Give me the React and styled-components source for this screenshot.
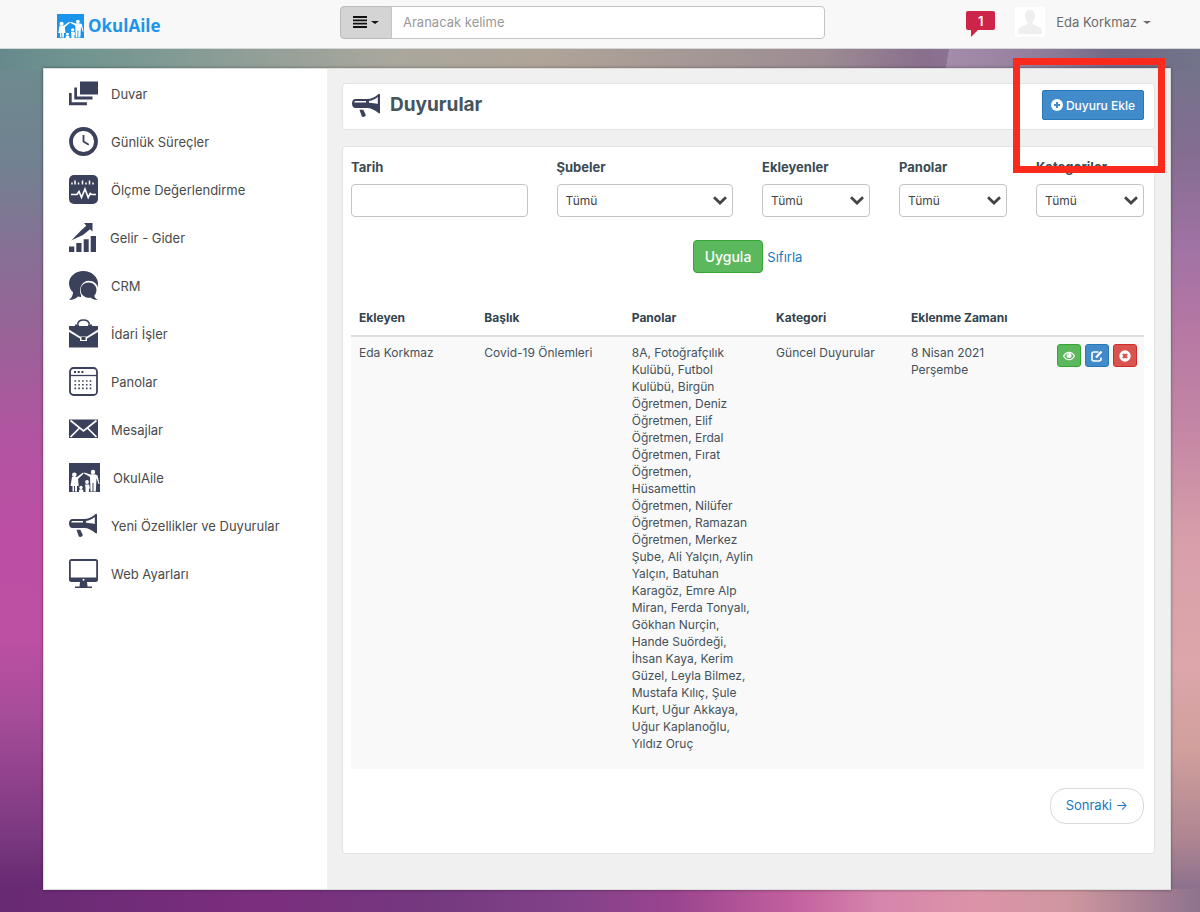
import React from "react";
import styled, { createGlobalStyle } from "styled-components";

const GlobalStyle = createGlobalStyle`
	* {
		box-sizing: border-box;
	}
	body {
		margin: 0;
		font-family: Inter, "Liberation Sans", sans-serif;
		font-size: 13px;
		line-height: 20px;
		color: #44515a;
		background-color: #8b5a96;
		background-image:
			linear-gradient(90deg, #682a73 0%, #7b2e7e 22%, #74397f 36%, #834289 48%, #9a448e 56%, #c2609f 66%, #d584ab 73%, #dc93a9 81%, #cf979f 89%, #8e728d 100%),
			linear-gradient(100deg, transparent 79%, #a38caa 79%, transparent 92%),
			linear-gradient(90deg, #668a8c 0%, #6f9490 6%, #a9a79d 32%, #b0a498 45%, #9d8d93 68%, #8a6f8d 77%, #8f7898 82%, #716a86 93%, #71748a 100%),
			linear-gradient(180deg, #6c8c8f 6%, #728191 18%, #886f95 28%, #9b6198 38%, #b055a0 47%, #bc4fa3 58%, #bd50a2 70%, #a84d99 78%, #79387f 92%, #682a73 97%),
			linear-gradient(180deg, #71748a 6%, #856d91 17%, #a073a4 27%, #b677a4 36%, #c688a5 48%, #d9a0aa 60%, #dca6aa 73%, #d1a09d 82%, #af8592 92%, #8e728d 97%);
		background-size: 100% 24px, 100% 70px, 100% 70px, 50% 100%, 50% 100%;
		background-position: left bottom, left top, left top, left top, right top;
		background-repeat: no-repeat;
	}
	button, input, select {
		font-family: inherit;
	}
	a {
		color: #1a78c2;
		text-decoration: none;
	}
`;

const Header = styled.header`
	display: flex;
	align-items: center;
	height: 49px;
	padding: 0 49px 4px 57px;
	background: #f8f8f8;
	border-bottom: 1px solid #d3d7d7;
`;

const Logo = styled.a`
	display: flex;
	align-items: center;
	gap: 4px;
	width: 283px;
	padding-top: 8px;
	font-family: "Open Sans", "Noto Sans", sans-serif;
	font-size: 17px;
	font-weight: 700;
	color: #1b95ec;
`;

const Search = styled.form`
	display: flex;
	flex: 1;
	height: 33px;
`;

const SearchMenu = styled.button`
	display: flex;
	align-items: center;
	justify-content: center;
	gap: 4px;
	width: 52px;
	padding: 0;
	color: #111;
	background: #d4d4d4;
	border: 1px solid #bbb;
	border-radius: 4px 0 0 4px;
`;

const SearchInput = styled.input`
	flex: 1;
	min-width: 0;
	margin-left: -1px;
	padding: 0 11px;
	font-size: 13px;
	background: #fff;
	border: 1px solid #c4c4c4;
	border-radius: 0 4px 4px 0;
	&::placeholder {
		color: #999;
	}
`;

const Caret = styled.span`
	border-top: 3px solid ${(props) => props.color};
	border-left: 4px solid transparent;
	border-right: 4px solid transparent;
`;

const HeaderRight = styled.div`
	display: flex;
	align-items: center;
	justify-content: flex-end;
	gap: 20px;
	width: 326px;
`;

const Bubble = styled.a`
	position: relative;
	width: 29px;
	height: 19px;
	margin-bottom: 4px;
	border-radius: 2px;
	background: #cc2549;
	color: #fff;
	text-align: center;
	font-weight: 600;
	line-height: 20px;
	&::after {
		content: "";
		position: absolute;
		left: 5px;
		top: 18px;
		border-top: 8px solid #cc2549;
		border-right: 8px solid transparent;
	}
`;

const UserMenu = styled.button`
	display: flex;
	align-items: center;
	gap: 6px;
	padding: 0;
	border: 0;
	background: none;
	font-size: 13px;
	color: #6b6b6b;
`;

const Avatar = styled.svg`
	margin-right: 5px;
	background: #fff;
`;

const Page = styled.div`
	position: relative;
	display: flex;
	margin: 19px 29px 0 43px;
	background: #f0f0f0;
	border: 1px solid #dcdcdc;
	box-shadow: 0 0 3px rgba(0, 0, 0, 0.4);
`;

const Outer = styled.div`
	padding-bottom: 23px;
`;

const Highlight = styled.div`
	position: absolute;
	top: -11px;
	right: 5px;
	width: 152px;
	height: 115px;
	border: 7px solid #fc2a1c;
	pointer-events: none;
`;

const Sidebar = styled.nav`
	width: 283px;
	flex-shrink: 0;
	background: #fff;
`;

const MenuItem = styled.a`
	display: flex;
	align-items: center;
	gap: 13px;
	height: 48px;
	padding-left: 25px;
	color: #4a4a4a;
	span {
		padding-top: 2px;
	}
`;

const Content = styled.main`
	flex: 1;
	min-width: 0;
	display: flex;
	flex-direction: column;
	gap: 16px;
	padding: 14px 15px 35px;
`;

const Card = styled.section`
	background: #fff;
	border: 1px solid #e3e3e3;
	border-radius: 4px;
`;

const TitleCard = styled(Card)`
	display: flex;
	align-items: center;
	gap: 9px;
	height: 47px;
	padding: 0 10px 3px 9px;
`;

const Title = styled.h1`
	flex: 1;
	margin: 0;
	font-size: 19px;
	font-weight: 700;
	line-height: 24px;
	color: #46545c;
`;

const AddButton = styled.button`
	display: flex;
	align-items: center;
	gap: 3px;
	height: 30px;
	padding: 0 8px;
	font-size: 12px;
	font-weight: 500;
	color: #fff;
	background: #428bca;
	border: 1px solid #2877b8;
	border-radius: 2px;
`;

const ListCard = styled(Card)`
	padding: 10px 10px 29px 8px;
`;

const Filters = styled.form`
	display: grid;
	grid-template-columns: repeat(12, 1fr);
	column-gap: 29px;
`;

const Field = styled.label`
	grid-column: span ${(props) => props.$span};
	display: flex;
	flex-direction: column;
	gap: 7px;
	font-weight: 700;
	color: #3a4b54;
`;

const TextInput = styled.input`
	width: 100%;
	height: 33px;
	padding: 0 8px;
	background: #fff;
	border: 1px solid #c4c4c4;
	border-radius: 4px;
`;

const SelectBox = styled.div`
	position: relative;
	svg {
		position: absolute;
		right: 6px;
		top: 12px;
		pointer-events: none;
	}
`;

const Select = styled.select`
	appearance: none;
	display: block;
	width: 100%;
	height: 33px;
	padding: 0 8px;
	font-size: 12px;
	color: #444;
	background: #fff;
	border: 1px solid #c4c4c4;
	border-radius: 4px;
`;

const FilterActions = styled.div`
	grid-column: 1 / -1;
	display: flex;
	justify-content: center;
	align-items: center;
	gap: 4px;
	padding: 23px 0 28px;
`;

const ApplyButton = styled.button`
	height: 33px;
	padding: 0 11px;
	font-size: 14px;
	font-weight: 500;
	color: #fff;
	background: #5cb85c;
	border: 1px solid #35a535;
	border-radius: 4px;
`;

const Table = styled.table`
	width: 100%;
	table-layout: fixed;
	border-collapse: collapse;
	font-size: 12px;
	line-height: 17px;
	th {
		padding: 8px 8px 9px;
		text-align: left;
		font-weight: 700;
		color: #33444d;
		border-bottom: 2px solid #ddd;
	}
	td {
		height: 433px;
		padding: 7px 12px 7px 8px;
		vertical-align: top;
		background: #f9f9f9;
	}
`;

const Col = styled.col`
	width: ${(props) => props.$share}%;
`;

const RowActions = styled.div`
	display: flex;
	gap: 4px;
`;

const IconButton = styled.button`
	display: flex;
	flex-shrink: 0;
	align-items: center;
	justify-content: center;
	width: 24px;
	height: 23px;
	padding: 0;
	color: #fff;
	background: ${(props) => props.$fill};
	border: 1px solid ${(props) => props.$edge};
	border-radius: 3px;
`;

const Pager = styled.div`
	display: flex;
	justify-content: flex-end;
	padding-top: 19px;
`;

const NextLink = styled.a`
	padding: 6px 15px 8px;
	line-height: 20px;
	background: #fff;
	border: 1px solid #d9d9d9;
	border-radius: 16px;
`;

const INK = "#3b415a";

const Icon = ({ width = 29, height = 29, children }) => (
	<svg
		width={width}
		height={height}
		viewBox={`0 0 ${width} ${height}`}
		fill={INK}
		aria-hidden="true"
	>
		{children}
	</svg>
);

const WallIcon = () => (
	<Icon>
		<path d="M11 2.500h18v13H11zM5.300 8.500h2.700v9h15.500v3H5.300zM0 14h2.700v9.300h15.200v3H0z" />
	</Icon>
);

const ClockIcon = () => (
	<Icon>
		<circle cx="14.5" cy="14.5" r="12.5" fill="none" stroke={INK} strokeWidth="3.8" />
		<path d="M14.5 8v6.5l5.3 3.2" fill="none" stroke={INK} strokeWidth="1.8" />
	</Icon>
);

const MeasureIcon = () => (
	<Icon>
		<rect width="29" height="29" rx="5" />
		<path
			d="M3 7.500v2M6 5.500v4M9.500 7.500v2M13.500 5.500v4M17 7.500v2M20.500 5.500v4M24 7.500v2"
			stroke="#fff"
			strokeWidth="1.500"
		/>
		<path
			d="M2 19.500h6l2-3 2.500 6 3.500-8.500 3.200 8.500 2-4 1.500 1H27"
			fill="none"
			stroke="#fff"
			strokeWidth="1.600"
		/>
	</Icon>
);

const ChartIcon = () => (
	<Icon width={28}>
		<path d="M0 23.500h5.300V29H0zM7.300 20h5.200v9H7.300zM14.700 16.300h5V29h-5zM21.700 13H27v16h-5.300z" />
		<path d="M23.500 0v8.500l-2.500-2.300L14 12 2.500 17.300 12.500 7l4.800-4.200L15 0z" />
	</Icon>
);

const ChatIcon = () => (
	<Icon>
		<path d="M14.300 0C6.400 0 0 5.500 0 12.500c0 3.700 1.600 6.500 4 8.700C4 24.500 2.300 27 0 29c4 0 7-1.500 9-3.500 1.500.5 3.400.6 5.300.6C22.200 26 29 20 29 12.700 29 5.500 22.200 0 14.300 0z" />
		<path d="M19.500 9.700c5 0 9.500 3 9.500 9V29H12V24c-3-6 1-14.300 7.500-14.300z" fill="#fff" />
		<path d="M19.500 11.500c4.500 0 8 3.300 8 7.500 0 2.500-1 4.300-2.200 5.700.4 2 1.800 3.300 3.700 4.300-3 .1-5.500-.8-7-2.300-6 .8-10.300-2.700-10.300-7.700 0-4.200 3.300-7.500 7.800-7.500z" />
	</Icon>
);

const BriefcaseIcon = () => (
	<Icon>
		<path d="M8.500 5.500C9 2 11 1 14.500 1s5.500 1 6 4.500" fill="none" stroke={INK} strokeWidth="1.600" />
		<path d="M0 7h6V5.500h4V7h9V5.500h4V7h6v3.500L18 17.500h-7L0 10.500z" />
		<path d="M0 13l11 6.500V22h7v-2.500L29 13v15.500H0z" />
		<rect x="12.500" y="18" width="4" height="3" />
	</Icon>
);

const BoardIcon = () => (
	<Icon>
		<rect x="1" y="1" width="27" height="27" rx="3.500" fill="none" stroke={INK} strokeWidth="1.800" />
		<path d="M1 8.500h27" stroke={INK} strokeWidth="1.300" />
		<path d="M5 5h9.500" stroke={INK} strokeWidth="2" strokeDasharray="2 1.700" />
		<path
			d="M5.500 14h17M5.500 17.700h17M5.500 21.400h17"
			stroke={INK}
			strokeWidth="1.600"
			strokeDasharray="1.600 2.200"
		/>
	</Icon>
);

const MailIcon = () => (
	<Icon>
		<rect y="4.500" width="29" height="18.500" />
		<path
			d="M1.500 5.500l13 10.500 13-10.500M1.500 22l9-9M27.500 22l-9-9"
			fill="none"
			stroke="#fff"
			strokeWidth="1.700"
		/>
	</Icon>
);

const FamilyMark = ({ width, height, color }) => (
	<svg width={width} height={height} viewBox="0 0 31 29" preserveAspectRatio="none" aria-hidden="true">
		<path d="M0 0h31v29H0z" fill={color} />
		<g fill="#fff">
			<circle cx="5.300" cy="11.700" r="2.300" />
			<circle cx="24" cy="9" r="2.200" />
			<circle cx="18" cy="19" r="1.900" />
			<circle cx="12" cy="24.500" r="1.700" />
			<path d="M3 14h5l6-4.500.8 1L9 16l.7 7H8v5.500H6V23H5v5.500H3.500V23H1.500z" />
			<path d="M21.500 11.500l-6-2-.5 1 6 3.500.5 14.500h2V20h1v8.500h2.300L27.500 15l2 6h1L28.500 12.500c-1-1-5-1.500-7-1z" />
			<path d="M16 21.500h4l1 4h-1v3.500h-3.500v-4zM10 27l2-1 2.300 1v2H10z" />
		</g>
	</svg>
);

const MegaphoneIcon = () => (
	<Icon>
		<path d="M3.500 8H15c4 0 8-1.700 11.500-5 .8-.6 1.500 0 1.500.8v17.600c0 .9-.8 1.300-1.600.7C23 19 19 17 15 17H3.500C1.300 17 0 15 0 12.500S1.300 8 3.500 8z" />
		<path
			d="M3.500 9.900H14v1.700H2.200c.2-1 .6-1.700 1.300-1.700zM17 9.900c3.500-.5 6.300-1.900 8.800-4v7c-2.700-.6-5.300-1-8.800-1.200z"
			fill="#fff"
		/>
		<path d="M7.500 18.700h3.800l2.500 5.300c-.3 1.700-2.800 2.500-4 1.500z" />
	</Icon>
);

const MonitorIcon = () => (
	<Icon>
		<path d="M2.500 0h24A2.500 2.500 0 0 1 29 2.500v18a2.500 2.500 0 0 1-2.500 2.500h-24A2.500 2.500 0 0 1 0 20.500v-18A2.500 2.500 0 0 1 2.500 0zM11 23h7l.5 4.500H23V29H6v-1.500h4.500z" />
		<path d="M1.800 2h25.400v16.500H1.800z" fill="#fff" />
		<circle cx="14.500" cy="20.700" r="1" fill="#fff" />
	</Icon>
);

const ChevronIcon = () => (
	<svg width="14" height="9" viewBox="0 0 14 9" aria-hidden="true">
		<path d="M1 1.300l6 5.700 6-5.700" fill="none" stroke="#444" strokeWidth="2.800" />
	</svg>
);

const LinesIcon = () => (
	<svg width="14" height="12" viewBox="0 0 14 12" aria-hidden="true">
		<path d="M0 1h14M0 4.300h14M0 7.600h14M0 11h14" stroke="#111" strokeWidth="1.800" />
	</svg>
);

const PlusIcon = () => (
	<svg width="12" height="12" viewBox="0 0 12 12" aria-hidden="true">
		<circle cx="6" cy="6" r="6" fill="#fff" />
		<path d="M6 3v6M3 6h6" stroke="#428bca" strokeWidth="2" />
	</svg>
);

const EyeIcon = () => (
	<svg width="12" height="10" viewBox="0 0 12 10" fill="none" stroke="#fff" aria-hidden="true">
		<path d="M.6 5C2 2.300 4 1.300 6 1.300S10 2.300 11.400 5C10 7.700 8 8.700 6 8.700S2 7.700.6 5z" strokeWidth="1.200" />
		<circle cx="6" cy="4.600" r="2.500" fill="#fff" stroke="none" />
		<path d="M4.800 4.300c.1-.7.500-1 1.200-1.100" stroke="#5cb85c" strokeWidth=".8" />
	</svg>
);

const EditIcon = () => (
	<svg width="12" height="12" viewBox="0 0 12 12" fill="none" stroke="#fff" aria-hidden="true">
		<path d="M7.500 2H3Q1 2 1 4v5q0 2 2 2h5q2 0 2-2V7.500" strokeWidth="1.600" />
		<path d="M5 7.500l5.500-6" strokeWidth="2.200" />
	</svg>
);

const RemoveIcon = () => (
	<svg width="12" height="12" viewBox="0 0 12 12" aria-hidden="true">
		<circle cx="6" cy="6" r="5.700" fill="#fff" />
		<path d="M4 4l4 4M8 4L4 8" stroke="#d9534f" strokeWidth="2.400" />
	</svg>
);

const menu = [
	{ label: "Duvar", icon: <WallIcon /> },
	{ label: "Günlük Süreçler", icon: <ClockIcon /> },
	{ label: "Ölçme Değerlendirme", icon: <MeasureIcon /> },
	{ label: "Gelir - Gider", icon: <ChartIcon /> },
	{ label: "CRM", icon: <ChatIcon /> },
	{ label: "İdari İşler", icon: <BriefcaseIcon /> },
	{ label: "Panolar", icon: <BoardIcon /> },
	{ label: "Mesajlar", icon: <MailIcon /> },
	{ label: "OkulAile", icon: <FamilyMark width={31} height={29} color={INK} /> },
	{ label: "Yeni Özellikler ve Duyurular", icon: <MegaphoneIcon /> },
	{ label: "Web Ayarları", icon: <MonitorIcon /> },
];

const selects = [
	{ label: "Şubeler", span: 3 },
	{ label: "Ekleyenler", span: 2 },
	{ label: "Panolar", span: 2 },
	{ label: "Kategoriler", span: 2 },
];

const columns = [
	{ label: "Ekleyen", share: 15.8 },
	{ label: "Başlık", share: 18.6 },
	{ label: "Panolar", share: 18.2 },
	{ label: "Kategori", share: 17 },
	{ label: "Eklenme Zamanı", share: 18.4 },
	{ label: "", share: 12 },
];

const announcements = [
	{
		author: "Eda Korkmaz",
		title: "Covid-19 Önlemleri",
		boards:
			"8A, Fotoğrafçılık Kulübü, Futbol Kulübü, Birgün Öğretmen, Deniz Öğretmen, Elif Öğretmen, Erdal Öğretmen, Fırat Öğretmen, Hüsamettin Öğretmen, Nilüfer Öğretmen, Ramazan Öğretmen, Merkez Şube, Ali Yalçın, Aylin Yalçın, Batuhan Karagöz, Emre Alp Miran, Ferda Tonyalı, Gökhan Nurçin, Hande Suördeği, İhsan Kaya, Kerim Güzel, Leyla Bilmez, Mustafa Kılıç, Şule Kurt, Uğur Akkaya, Uğur Kaplanoğlu, Yıldız Oruç",
		category: "Güncel Duyurular",
		date: "8 Nisan 2021 Perşembe",
	},
];

const TopBar = () => (
	<Header>
		<Logo href="#">
			<FamilyMark width={27} height={24} color="#1b95ec" />
			OkulAile
		</Logo>
		<Search>
			<SearchMenu type="button" aria-label="Arama türü">
				<LinesIcon />
				<Caret color="#111" />
			</SearchMenu>
			<SearchInput placeholder="Aranacak kelime" aria-label="Aranacak kelime" />
		</Search>
		<HeaderRight>
			<Bubble href="#">1</Bubble>
			<UserMenu type="button">
				<Avatar width="30" height="30" viewBox="0 0 30 30" aria-hidden="true">
					<path
						d="M15 3c3 0 5 2.200 5 5.500 0 3-1.200 5-2.500 6.500v2c1 1.500 8 2.300 9.300 5.500.3 1 .2 3.500.2 4.500H3c0-1-.1-3.500.2-4.500C4.500 19.300 11.500 18.500 12.500 17v-2C11.200 13.500 10 11.500 10 8.500 10 5.200 12 3 15 3z"
						fill="#efefef"
					/>
				</Avatar>
				Eda Korkmaz
				<Caret color="#6b6b6b" />
			</UserMenu>
		</HeaderRight>
	</Header>
);

const AnnouncementTable = () => (
	<Table>
		<colgroup>
			{columns.map((col) => (
				<Col key={col.label} $share={col.share} />
			))}
		</colgroup>
		<thead>
			<tr>
				{columns.map((col) => (
					<th key={col.label}>{col.label}</th>
				))}
			</tr>
		</thead>
		<tbody>
			{announcements.map((item) => (
				<tr key={item.title}>
					<td>{item.author}</td>
					<td>{item.title}</td>
					<td>{item.boards}</td>
					<td>{item.category}</td>
					<td>{item.date}</td>
					<td>
						<RowActions>
							<IconButton $fill="#5cb85c" $edge="#35a535" aria-label="Görüntüle">
								<EyeIcon />
							</IconButton>
							<IconButton $fill="#428bca" $edge="#2877b8" aria-label="Düzenle">
								<EditIcon />
							</IconButton>
							<IconButton $fill="#d9534f" $edge="#cf2b2b" aria-label="Sil">
								<RemoveIcon />
							</IconButton>
						</RowActions>
					</td>
				</tr>
			))}
		</tbody>
	</Table>
);

const App = () => {
	return (
		<Outer>
			<GlobalStyle />
			<TopBar />
			<Page>
				<Sidebar>
					{menu.map((item) => (
						<MenuItem key={item.label} href="#">
							{item.icon}
							<span>{item.label}</span>
						</MenuItem>
					))}
				</Sidebar>
				<Content>
					<TitleCard>
						<MegaphoneIcon />
						<Title>Duyurular</Title>
						<AddButton type="button">
							<PlusIcon />
							Duyuru Ekle
						</AddButton>
					</TitleCard>
					<ListCard>
						<Filters>
							<Field $span={3}>
								Tarih
								<TextInput type="text" />
							</Field>
							{selects.map((item) => (
								<Field key={item.label} $span={item.span}>
									{item.label}
									<SelectBox>
										<Select>
											<option>Tümü</option>
										</Select>
										<ChevronIcon />
									</SelectBox>
								</Field>
							))}
							<FilterActions>
								<ApplyButton type="button">Uygula</ApplyButton>
								<a href="#">Sıfırla</a>
							</FilterActions>
						</Filters>
						<AnnouncementTable />
						<Pager>
							<NextLink href="#">Sonraki →</NextLink>
						</Pager>
					</ListCard>
				</Content>
				<Highlight />
			</Page>
		</Outer>
	);
};

export default App;
